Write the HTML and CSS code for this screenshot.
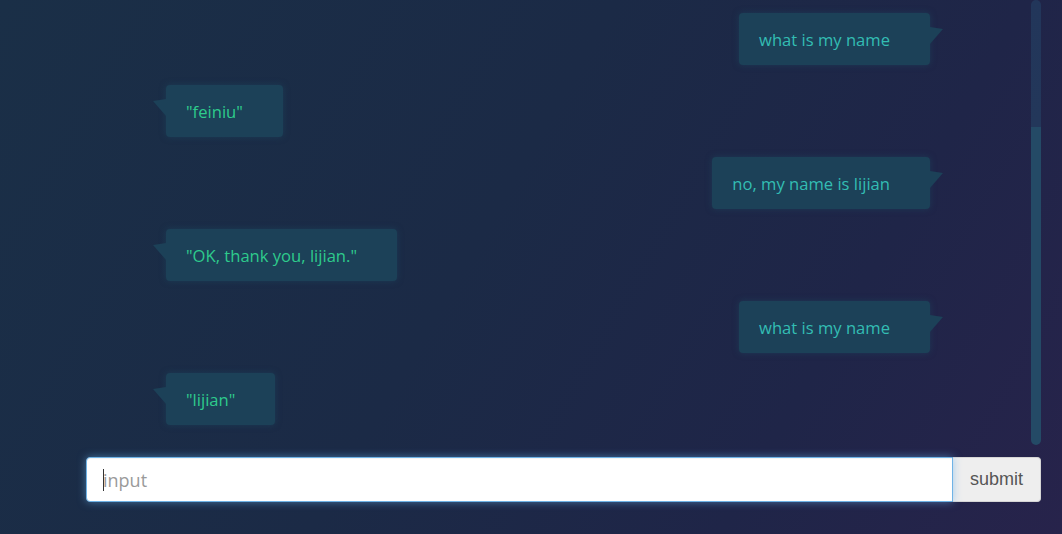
FILE: index.html
```html
<!DOCTYPE html>
<html lang="en">
<head>
<meta charset="utf-8">
<title>Chat</title>
<link rel="stylesheet" href="styles.css">
</head>
<body>
<div class="app">
  <div class="chat">
    <div class="messages">
      <div class="row row-me"><div class="bubble bubble-me">what is my name</div></div>
      <div class="row row-bot"><div class="bubble bubble-bot">"feiniu"</div></div>
      <div class="row row-me"><div class="bubble bubble-me">no, my name is lijian</div></div>
      <div class="row row-bot"><div class="bubble bubble-bot">"OK, thank you, lijian."</div></div>
      <div class="row row-me"><div class="bubble bubble-me">what is my name</div></div>
      <div class="row row-bot"><div class="bubble bubble-bot">"lijian"</div></div>
    </div>
    <div class="scrollbar"><div class="thumb"></div></div>
  </div>
  <form class="composer">
    <div class="field">
      <input class="input" type="text" placeholder="input">
      <span class="caret"></span>
    </div>
    <button class="submit" type="button">submit</button>
  </form>
</div>
</body>
</html>
```
FILE: styles.css
```css
html, body {
  margin: 0;
  height: 100%;
}
body {
  background: linear-gradient(120deg, #1a2f47 0%, #1b2a46 45%, #1f2548 75%, #27234b 100%);
  font-family: "Open Sans", "Noto Sans", sans-serif;
  overflow: hidden;
}
.app {
  display: flex;
  flex-direction: column;
  gap: 12px;
  padding: 0 21px 0 86px;
  height: 534px;
  box-sizing: border-box;
}
.chat {
  display: flex;
  height: 445px;
}
.messages {
  flex: 1;
  display: flex;
  flex-direction: column;
  gap: 20px;
  padding: 13px 101px 0 80px;
}
.row {
  display: flex;
}
.row-me { justify-content: flex-end; }
.row-bot { justify-content: flex-start; }
.bubble {
  position: relative;
  height: 52px;
  box-sizing: border-box;
  padding: 0 40px 0 20px;
  display: flex;
  align-items: center;
  background: #1c4158;
  border-radius: 4px;
  font-size: 16.6px;
  box-shadow: 0 0 6px rgba(30, 70, 95, 0.6);
  white-space: nowrap;
}
.bubble-me { color: #33bdb3; }
.bubble-bot { color: #2ecb8c; }
.bubble::after {
  content: "";
  position: absolute;
  top: 14px;
  width: 13px;
  height: 17px;
  background: #1c4158;
}
.bubble-me::after {
  right: -13px;
  clip-path: polygon(0 0, 100% 2px, 0 100%);
}
.bubble-bot::after {
  left: -13px;
  clip-path: polygon(0 2px, 100% 0, 100% 100%);
}
.scrollbar {
  width: 10px;
  height: 445px;
  display: flex;
  flex-direction: column;
  justify-content: flex-end;
  background: linear-gradient(#22365a, #23375a 127px, transparent 127px);
  border-radius: 5px 5px 0 0;
}
.thumb {
  height: 318px;
  background: #244a66;
  border-radius: 0 0 5px 5px;
}
.composer {
  display: flex;
  height: 45px;
  margin: 0;
}
.field {
  position: relative;
  flex: 1;
  display: flex;
}
.input {
  flex: 1;
  box-sizing: border-box;
  height: 45px;
  border: 1px solid #6fb3e6;
  border-radius: 4px 0 0 4px;
  box-shadow: 0 0 8px rgba(102, 175, 233, 0.55), inset 0 1px 1px rgba(0,0,0,0.05);
  padding: 0 16px;
  font-family: "Open Sans", "Noto Sans", sans-serif;
  font-size: 18px;
  color: #555;
  outline: none;
  background: #fff;
}
.input::placeholder {
  color: #9a9a9a;
}
.caret {
  position: absolute;
  left: 17px;
  top: 12px;
  width: 1px;
  height: 22px;
  background: #333;
}
.submit {
  width: 88px;
  height: 45px;
  box-sizing: border-box;
  border: 1px solid #d5d5d5;
  border-left: none;
  border-radius: 0 4px 4px 0;
  background: #eeeeee;
  color: #555;
  font-family: "Liberation Sans", Arial, sans-serif;
  font-size: 18px;
  padding: 0;
}
```
